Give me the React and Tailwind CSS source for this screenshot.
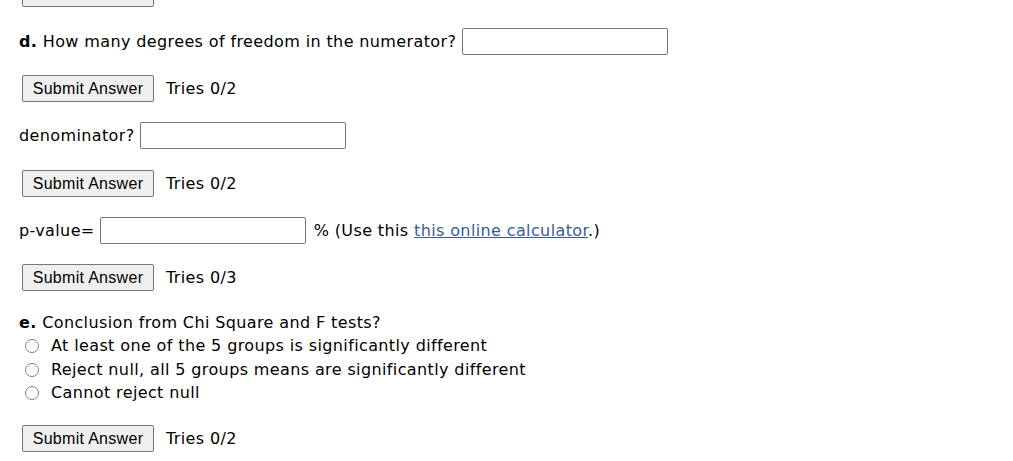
import React from 'react';

const Btn = () => (
    <button className="h-[27px] w-[132px] flex items-center justify-center bg-[#efefef] border border-[#767676] rounded-[2px] text-[16px] tracking-[0.3px] text-black font-['Liberation_Sans',Arial,sans-serif] leading-none">
        Submit Answer
    </button>
);

const SubmitRow = ({ tries, className = '' }) => (
    <div className={`flex items-center h-[27px] pl-[22px] ${className}`}>
        <Btn />
        <span className="ml-[12px]">Tries {tries}</span>
    </div>
);

const Field = () => (
    <input type="text" className="w-[206px] h-[27px] border border-[#767676] rounded-[2px] bg-white" />
);

const Radio = ({ label }) => (
    <label className="flex items-center h-[23.5px]">
        <span className="ml-[6px] mr-[12px] w-[14px] h-[14px] rounded-full border border-[#808080] bg-white"></span>
        {label}
    </label>
);

export default function App() {
    return (
        <div className="w-[1013px] h-[461px] overflow-hidden bg-white text-[16px] tracking-[0.38px] text-black font-['DejaVu_Sans',Verdana,sans-serif]">
            <SubmitRow tries="0/2" className="mt-[-20px]" />

            <div className="flex items-center h-[27px] mt-[21px] pl-[19px]">
                <span><b>d.</b> How many degrees of freedom in the numerator?</span>
                <span className="ml-[6px]"><Field /></span>
            </div>

            <SubmitRow tries="0/2" className="mt-[20px]" />

            <div className="flex items-center h-[27px] mt-[20px] pl-[19px]">
                <span>denominator?</span>
                <span className="ml-[5px]"><Field /></span>
            </div>

            <SubmitRow tries="0/2" className="mt-[21px]" />

            <div className="flex items-center h-[27px] mt-[20px] pl-[19px]">
                <span>p-value=</span>
                <span className="ml-[5px]"><Field /></span>
                <span className="ml-[8px]">% (Use this <a className="text-[#3b5b96] underline">this online calculator</a>.)</span>
            </div>

            <SubmitRow tries="0/3" className="mt-[20px]" />

            <div className="mt-[20px] pl-[19px] flex flex-col">
                <div className="h-[23.5px] flex items-center"><span><b>e.</b> Conclusion from Chi Square and F tests?</span></div>
                <Radio label="At least one of the 5 groups is significantly different" />
                <Radio label="Reject null, all 5 groups means are significantly different" />
                <Radio label="Cannot reject null" />
            </div>

            <SubmitRow tries="0/2" className="mt-[20px]" />
        </div>
    );
}
